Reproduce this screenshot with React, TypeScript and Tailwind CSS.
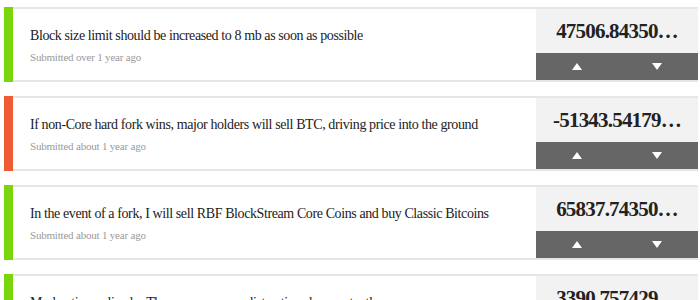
const rows = [
  {
    title: "Block size limit should be increased to 8 mb as soon as possible",
    when: "Submitted over 1 year ago",
    score: "47506.84350…",
    color: "bg-[#7ad60a]",
  },
  {
    title:
      "If non-Core hard fork wins, major holders will sell BTC, driving price into the ground",
    when: "Submitted about 1 year ago",
    score: "-51343.54179…",
    color: "bg-[#ef5b34]",
  },
  {
    title:
      "In the event of a fork, I will sell RBF BlockStream Core Coins and buy Classic Bitcoins",
    when: "Submitted about 1 year ago",
    score: "65837.74350…",
    color: "bg-[#7ad60a]",
  },
  {
    title: "Moderation policy by Theymos removes distractions by constantly",
    when: "Submitted about 1 year ago",
    score: "3390.757429…",
    color: "bg-[#7ad60a]",
  },
];

const Up = () => (
  <svg width="10" height="7" viewBox="0 0 10 7">
    <path d="M5 0 L10 7 L0 7 Z" fill="#fff" />
  </svg>
);

const Down = () => (
  <svg width="10" height="7" viewBox="0 0 10 7">
    <path d="M0 0 L10 0 L5 7 Z" fill="#fff" />
  </svg>
);

export default function App() {
  return (
    <div className="w-[700px] h-[300px] overflow-hidden bg-white pt-[7px] pl-[4px] pr-[2px] font-['Liberation_Serif',serif]">
      <div className="flex flex-col gap-[14px]">
        {rows.map((row, i) => (
          <div
            key={i}
            className="flex h-[75px] border-y-[2px] border-[#e6e6e6] bg-white"
          >
            <div className={`w-[9px] shrink-0 -my-[2px] ${row.color}`} />
            <div className="flex-1 pl-[17px] pt-[17px]">
              <p className="text-[14px] leading-[20px] text-[#222] tracking-[-0.4px] whitespace-nowrap">
                {row.title}
              </p>
              <p className="mt-[4px] text-[11px] leading-[14px] text-[#9a9a9a] tracking-[-0.2px]">
                {row.when}
              </p>
            </div>
            <div className="w-[162px] shrink-0 flex flex-col">
              <div className="h-[44px] bg-[#f2f2f2] flex items-center justify-center pt-[2px] text-[21px] font-bold text-[#222] tracking-[-0.8px]">
                {row.score}
              </div>
              <div className="flex-1 bg-[#666] flex items-center justify-between px-[36px]">
                <Up />
                <Down />
              </div>
            </div>
          </div>
        ))}
      </div>
    </div>
  );
}
